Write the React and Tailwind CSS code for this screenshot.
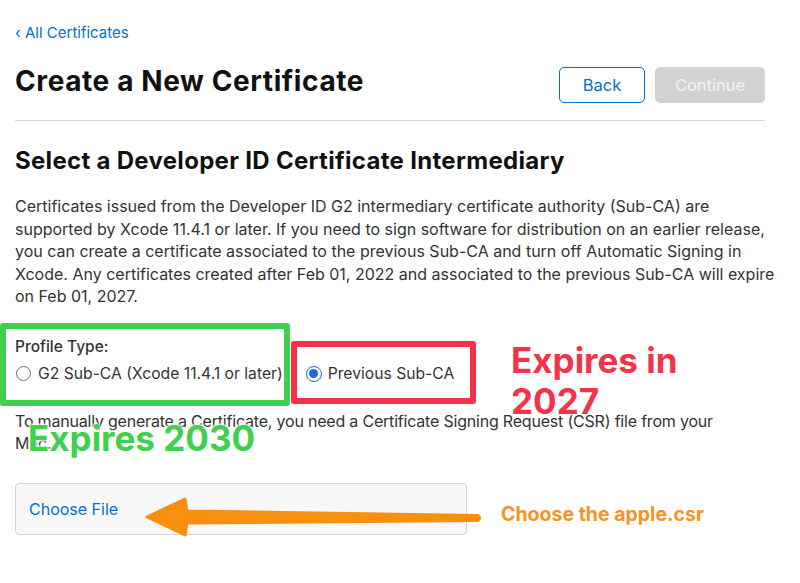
import React from "react";

const Radio = ({ checked }) =>
  checked ? (
    <span className="flex h-[16px] w-[16px] items-center justify-center rounded-full border-[1.5px] border-[#1769e0] bg-white">
      <span className="h-[9px] w-[9px] rounded-full bg-[#1769e0]" />
    </span>
  ) : (
    <span className="h-[15px] w-[15px] rounded-full border border-[#6e6e6e] bg-white" />
  );

const App = () => {
  return (
    <div className="relative h-[583px] w-[800px] overflow-hidden bg-white font-['Inter',sans-serif] text-[#333]">
      <div className="w-[765px] pl-[15px] pt-[22px]">
        <a href="#" className="block text-[15px] leading-[22px] text-[#0070c9]">
          ‹ All Certificates
        </a>

        <div className="mt-[20px] flex justify-between border-b border-[#d6d6d6] pb-[17px]">
          <h1 className="text-[28px] font-bold leading-[34px] tracking-[0.6px] text-[#111]">
            Create a New Certificate
          </h1>
          <div className="mt-[3px] flex gap-[10px]">
            <button className="h-[36px] w-[86px] rounded-[5px] border border-[#0070c9] bg-white text-[16.5px] text-[#0070c9]">
              Back
            </button>
            <button className="h-[36px] w-[110px] rounded-[5px] bg-[#d2d2d2] text-[16.5px] text-[#f4f4f4]">
              Continue
            </button>
          </div>
        </div>

        <h2 className="mt-[26px] text-[24px] font-bold leading-[28px] tracking-[0.3px] text-[#111]">
          Select a Developer ID Certificate Intermediary
        </h2>

        <p className="mt-[20px] whitespace-nowrap text-[16px] leading-[22.5px]">
          Certificates issued from the Developer ID G2 intermediary certificate authority (Sub-CA) are
          <br />
          supported by Xcode 11.4.1 or later. If you need to sign software for distribution on an earlier release,
          <br />
          you can create a certificate associated to the previous Sub-CA and turn off Automatic Signing in
          <br />
          Xcode. Any certificates created after Feb 01, 2022 and associated to the previous Sub-CA will expire
          <br />
          on Feb 01, 2027.
        </p>

        <div className="mt-[28px] text-[15.5px] font-medium leading-[22px] text-[#333]">
          Profile Type:
        </div>
        <div className="mt-[5px] flex h-[22px] items-center text-[15.7px]">
          <label className="flex items-center gap-[7px] pl-[1px]">
            <Radio />
            <span>G2 Sub-CA (Xcode 11.4.1 or later)</span>
          </label>
          <label className="ml-[23px] flex items-center gap-[6px]">
            <Radio checked />
            <span>Previous Sub-CA</span>
          </label>
        </div>

        <p className="mt-[25px] whitespace-nowrap text-[16px] leading-[22.5px] tracking-[-0.2px]">
          To manually generate a Certificate, you need a Certificate Signing Request (CSR) file from your
          <br />
          Mac.
        </p>

        <div className="mt-[28px] flex h-[52px] w-[452px] items-center rounded-[4px] border border-[#d2d2d2] bg-[#f8f8f8] px-[13px]">
          <span className="text-[16px] text-[#0070c9]">Choose File</span>
        </div>
      </div>

      {/* annotations */}
      <div className="absolute left-0 top-[323px] h-[83px] w-[290px] rounded-[3px] border-[6px] border-[#3fd04e]" />
      <div className="absolute left-[291px] top-[341px] h-[63px] w-[185px] rounded-[3px] border-[6px] border-[#f2334a]" />

      <div className="absolute left-[511px] top-[340px] text-[35px] font-bold leading-[41px] text-[#f2334a] [text-shadow:0_0_3px_#fff,0_0_3px_#fff]">
        Expires in
        <br />
        2027
      </div>
      <div className="absolute left-[28px] top-[421px] text-[35px] font-bold leading-none text-[#3fd04e] [text-shadow:0_0_3px_#fff,0_0_3px_#fff,0_0_3px_#fff]">
        Expires 2030
      </div>

      <svg className="pointer-events-none absolute inset-0" width="800" height="583" viewBox="0 0 800 583">
        <path
          d="M147 517 L185 499 L187 511 L478 515.5 L478 520.5 L187 523 L185 535 Z"
          fill="#f8900f"
          stroke="#f8900f"
          strokeWidth="3"
          strokeLinejoin="round"
        />
        <circle cx="478" cy="518" r="3" fill="#f8900f" />
      </svg>
      <div className="absolute left-[501px] top-[505px] text-[19.5px] font-bold leading-none text-[#f7931e] [text-shadow:0_0_3px_#fff,0_0_3px_#fff]">
        Choose the apple.csr
      </div>
    </div>
  );
};

export default App;
